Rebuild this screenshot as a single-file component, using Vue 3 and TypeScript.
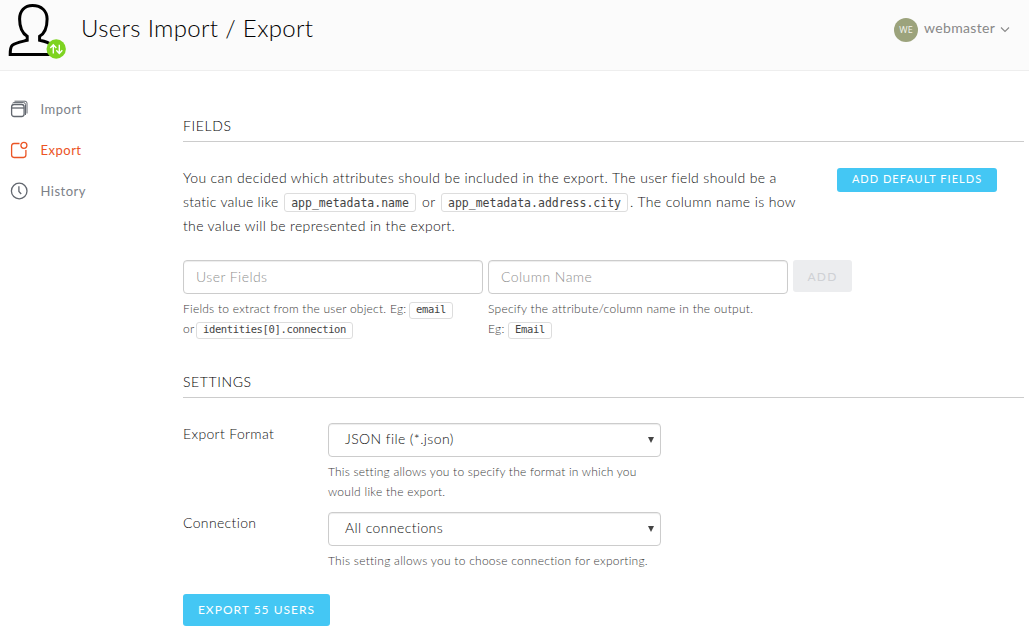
<script setup lang="ts">
import { ref } from 'vue'

type Icon = 'import' | 'export' | 'history'
const nav: { id: Icon; label: string }[] = [
  { id: 'import', label: 'Import' },
  { id: 'export', label: 'Export' },
  { id: 'history', label: 'History' },
]
const active = ref<Icon>('export')
const userCount = 55
</script>

<template>
  <div class="page">
    <header class="header">
      <svg class="logo" width="60" height="60" viewBox="0 0 60 60" fill="none">
        <path
          d="M26.5 5.5C18.5 5.5 13.6 11 13.6 19c0 8 3 14.500 7.600 17.300v4C15.500 41.700 9.500 42.500 6.200 45.300 4.300 47 4.200 50.500 4.200 54.400H48C48 46 46.500 43 33.600 40.300v-4C38.500 33.500 41.100 27 41.100 19 41.100 11 35.500 5.500 26.500 5.500Z"
          stroke="#000" stroke-width="3" />
        <circle cx="50.200" cy="49" r="9.700" fill="#7ed321" />
        <path d="M47.300 53.500v-8.500M44.300 48l3-3.200 3 3.200M53.300 44.800v8.500M50.300 50.300l3 3.200 3-3.200" stroke="#fff" stroke-width="1.400" />
      </svg>
      <h1 class="title">Users Import / Export</h1>
      <div class="account">
        <span class="avatar">WE</span>
        <span class="account-name">webmaster</span>
        <svg width="10" height="8" viewBox="0 0 10 8" fill="none"><path d="M1 1.500l4 4 4-4" stroke="#888" stroke-width="1.100" /></svg>
      </div>
    </header>

    <div class="body">
      <nav class="nav">
        <a v-for="item in nav" :key="item.id" class="nav-item" :class="{ active: item.id === active }" @click="active = item.id">
          <svg v-if="item.id === 'import'" width="18" height="18" viewBox="0 0 18 18" fill="none" stroke="currentColor">
            <rect x="1.600" y="4.500" width="12.500" height="12" rx="2.500" stroke-width="1.300" />
            <path d="M1.600 8h12.500" stroke-width="1.300" />
            <path d="M2.500 3.200Q3 2.600 4 2.600H13.500Q15.500 2.600 15.500 4.600V15M4.500 1.200H15Q17 1.200 17 3.200V13.500" stroke-width="1" />
          </svg>
          <svg v-else-if="item.id === 'export'" width="18" height="18" viewBox="0 0 18 18" fill="none" stroke="currentColor" stroke-width="1.300">
            <path d="M9.500 2.500H4Q1.600 2.500 1.600 4.900V14.100Q1.600 16.500 4 16.500H13.500Q15.900 16.500 15.900 14.100V9" />
            <circle cx="13.900" cy="4.300" r="3" />
          </svg>
          <svg v-else width="18" height="18" viewBox="0 0 18 18" fill="none" stroke="currentColor" stroke-width="1.300">
            <circle cx="9.200" cy="9" r="7.800" />
            <path d="M8.900 4.200V9.500L11.200 12" />
          </svg>
          <span class="nav-label">{{ item.label }}</span>
        </a>
      </nav>

      <main class="content">
        <h2 class="section">FIELDS</h2>
        <div class="intro">
          <div class="copy">
            <div class="line">You can decided which attributes should be included in the export. The user field should be a</div>
            <div class="line l2">
              <span class="w-static">static value like</span>
              <code class="chip c-name">app_metadata.name</code>
              <span class="w-or">or</span>
              <code class="chip c-city">app_metadata.address.city</code>
              <span class="l2-end">. The column name is how</span>
            </div>
            <div class="line l3">the value will be represented in the export.</div>
          </div>
          <button class="btn btn-default">ADD DEFAULT FIELDS</button>
        </div>

        <div class="form">
          <div class="field">
            <input class="input" placeholder="User Fields" />
            <div class="help"><span class="w-extract">Fields to extract from the user object. Eg:</span><code class="chip small c-email">email</code></div>
            <div class="help"><span class="w-or2">or</span><code class="chip small c-ident">identities[0].connection</code></div>
          </div>
          <div class="field">
            <input class="input" placeholder="Column Name" />
            <div class="help">Specify the attribute/column name in the output.</div>
            <div class="help"><span class="w-eg">Eg:</span><code class="chip small c-email">Email</code></div>
          </div>
          <button class="btn btn-add" disabled>ADD</button>
        </div>

        <h2 class="section settings">SETTINGS</h2>
        <div class="setting">
          <label class="label">Export Format</label>
          <div class="control">
            <div class="select"><span>JSON file (*.json)</span><i class="caret"></i></div>
            <div class="help format-help">This setting allows you to specify the format in which you</div>
            <div class="help">would like the export.</div>
          </div>
        </div>
        <div class="setting second">
          <label class="label">Connection</label>
          <div class="control">
            <div class="select"><span>All connections</span><i class="caret"></i></div>
            <div class="help">This setting allows you to choose connection for exporting.</div>
          </div>
        </div>
        <button class="btn btn-export">EXPORT {{ userCount }} USERS</button>
      </main>
    </div>
  </div>
</template>

<style>
html,
body {
  margin: 0;
  background: #fff;
}
</style>

<style scoped>
.page {
  width: 1029px;
  height: 638px;
  overflow: hidden;
  font-family: Lato, "Open Sans", sans-serif;
  font-size: 14px;
  font-weight: 300;
  color: #111;
}
.page * {
  box-sizing: border-box;
}
.header {
  display: flex;
  height: 71px;
  background: #fbfbfb;
  border-bottom: 1px solid #eee;
  padding-left: 6px;
}
.logo {
  flex: none;
}
.title {
  margin: 12px 0 0 15px;
  font-size: 24px;
  font-weight: 300;
  line-height: 32px;
  letter-spacing: 0.34px;
  color: #000;
  white-space: nowrap;
}
.account {
  display: flex;
  align-items: center;
  height: 24px;
  margin: 18px 19px 0 auto;
  color: #888;
}
.avatar {
  width: 24px;
  height: 24px;
  border-radius: 50%;
  background: #9ca37c;
  color: #f3f4ee;
  font: 9px/24px "Open Sans", sans-serif;
  text-align: center;
}
.account-name {
  width: 76px;
  margin-left: 6px;
  line-height: 22px;
  margin-top: -5px;
  font-weight: 400;
  letter-spacing: 0.35px;
}
.body {
  display: flex;
}
.nav {
  width: 183px;
  padding: 17px 0 0 10px;
  flex: none;
}
.nav-item {
  display: flex;
  align-items: center;
  height: 41px;
  gap: 12px;
  font-size: 13px;
  font-weight: 400;
  letter-spacing: 0.5px;
  color: #7c8188;
}
.nav-item svg {
  color: #62676f;
}
.nav-label {
  padding-left: 0.5px;
}
.nav-item.active,
.nav-item.active svg {
  color: #eb5424;
}
.content {
  width: 841px;
}
.section {
  margin: 0;
  height: 71px;
  padding-top: 45px;
  border-bottom: 1px solid #ccc;
  font-size: 14px;
  font-weight: 300;
  line-height: 20px;
  letter-spacing: 0.6px;
  color: #000;
}
.intro {
  display: flex;
  height: 94px;
  margin-top: 24px;
}
.copy {
  width: 654px;
}
.line {
  height: 24px;
  line-height: 24px;
  white-space: nowrap;
  letter-spacing: 0.365px;
}
.l2 {
  display: flex;
  align-items: center;
}
.l3 {
  letter-spacing: 0.33px;
}
.chip {
  display: block;
  height: 19px;
  border: 1px solid #ddd;
  border-radius: 3px;
  background: #fff;
  color: #444;
  font: 11.5px/18px "DejaVu Sans Mono", monospace;
  letter-spacing: 0;
  text-align: center;
  white-space: nowrap;
  flex: none;
}
.w-static {
  width: 101px;
  letter-spacing: 0.28px;
}
.c-name {
  width: 132px;
}
.w-or {
  width: 25px;
  padding-left: 6px;
}
.c-city {
  width: 187px;
}
.l2-end {
  padding-left: 2px;
}
.btn {
  display: block;
  border: 0;
  padding: 0;
  border-radius: 3px;
  background: #44c7f4;
  color: #fff;
  font-family: Lato, "Open Sans", sans-serif;
  white-space: nowrap;
}
.btn-default {
  width: 160px;
  height: 24px;
  margin-top: 2px;
  padding-bottom: 2px;
  font-size: 11px;
  line-height: 22px;
  letter-spacing: 1.02px;
}
.form {
  display: flex;
  gap: 5px;
  height: 81px;
}
.field {
  width: 300px;
}
.input {
  display: block;
  width: 300px;
  height: 34px;
  margin: 0 0 5px;
  padding: 0 12px 2px;
  border: 1px solid #ccc;
  border-radius: 4px;
  box-shadow: inset 0 1px 1px rgba(0, 0, 0, 0.075);
  font: 300 14px Lato, sans-serif;
  letter-spacing: 0.45px;
}
.input::placeholder {
  color: #909090;
}
.help {
  display: flex;
  align-items: center;
  height: 20px;
  line-height: 20px;
  font-size: 12px;
  letter-spacing: 0.26px;
  color: #3c3c3c;
  white-space: nowrap;
}
.format-help {
  letter-spacing: 0.21px;
}
.small {
  height: 17px;
  margin-top: 2px;
  font-size: 10.5px;
  line-height: 13px;
  letter-spacing: -0.36px;
}
.w-extract {
  width: 226px;
  letter-spacing: 0.24px;
}
.c-email {
  width: 44px;
}
.w-or2 {
  width: 13px;
}
.c-ident {
  width: 157px;
}
.w-eg {
  width: 20px;
}
.btn-add {
  width: 59px;
  height: 32px;
  background: #ecedef;
  color: #cfd1d5;
  font-size: 12px;
  letter-spacing: 1.2px;
}
.settings {
  height: 57px;
  padding-top: 31px;
}
.setting {
  display: flex;
  margin-top: 25px;
}
.second {
  margin-top: 10px;
}
.label {
  width: 145px;
  line-height: 22px;
  letter-spacing: 0.35px;
}
.control {
  width: 333px;
}
.select {
  display: flex;
  align-items: center;
  justify-content: space-between;
  height: 34px;
  margin-bottom: 5px;
  padding: 0 6px 2px 16px;
  border: 1px solid #ccc;
  border-radius: 4px;
  box-shadow: inset 0 1px 1px rgba(0, 0, 0, 0.075);
  line-height: 18px;
  letter-spacing: 0.4px;
}
.select span {
  margin-top: -1px;
}
.caret {
  margin-top: 2px;
  border: 3.5px solid transparent;
  border-top: 6px solid #444;
  border-bottom: 0;
}
.btn-export {
  width: 147px;
  height: 32px;
  margin-top: 23px;
  padding-bottom: 2px;
  font-size: 12px;
  letter-spacing: 1.02px;
}
</style>
